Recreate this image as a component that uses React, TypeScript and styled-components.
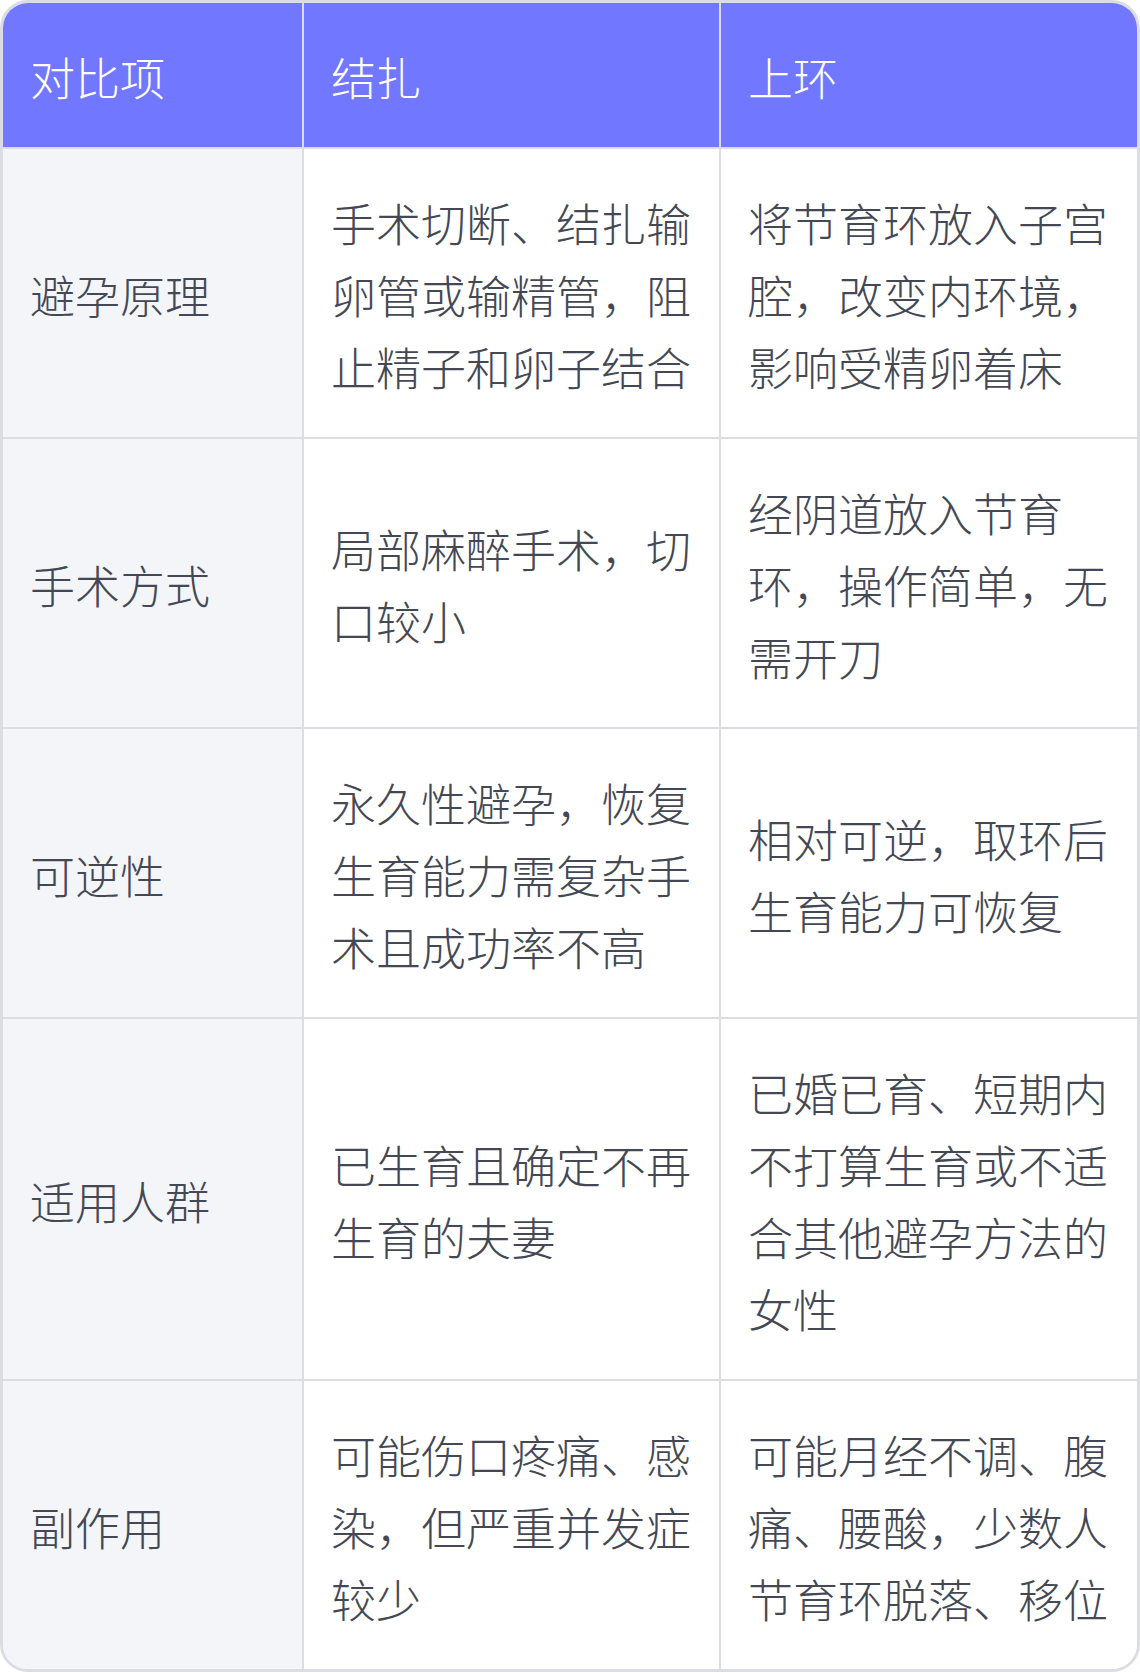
import styled, { createGlobalStyle } from "styled-components";

const GlobalStyle = createGlobalStyle`
    html, body {
        margin: 0;
        padding: 0;
        background: #ffffff;
    }
`;

const Frame = styled.div`
    width: 1140px;
    box-sizing: border-box;
    border: 3px solid #dcdde2;
    border-radius: 28px;
    overflow: hidden;
    background: #ffffff;
`;

const Table = styled.table`
    width: 100%;
    border-collapse: collapse;
    table-layout: fixed;
    font-family: "Noto Sans CJK SC", "Noto Sans", sans-serif;
    font-size: 45px;
    font-weight: 300;
    line-height: 72px;
`;

const HeadCell = styled.th`
    background: #7177ff;
    color: #ffffff;
    font-weight: 300;
    text-align: left;
    padding: 38px 16px 34px 27px;
    border-bottom: 2px solid #dcdde2;
    border-left: 2px solid #dcdde2;
    &:first-child {
        border-left: none;
    }
`;

const Row = styled.tr`
    &:last-child td {
        border-bottom: none;
    }
`;

const Cell = styled.td<{ $label?: boolean }>`
    background: ${(p) => (p.$label ? "#f4f5f9" : "#ffffff")};
    color: #434854;
    padding: 38px 16px 34px 27px;
    vertical-align: middle;
    border-bottom: 2px solid #dcdde2;
    border-left: 2px solid #dcdde2;
    &:first-child {
        border-left: none;
    }
`;

const rows = [
    {
        label: "避孕原理",
        ligation: "手术切断、结扎输卵管或输精管，阻止精子和卵子结合",
        iud: "将节育环放入子宫腔，改变内环境，影响受精卵着床",
    },
    {
        label: "手术方式",
        ligation: "局部麻醉手术，切口较小",
        iud: "经阴道放入节育环，操作简单，无需开刀",
    },
    {
        label: "可逆性",
        ligation: "永久性避孕，恢复生育能力需复杂手术且成功率不高",
        iud: "相对可逆，取环后生育能力可恢复",
    },
    {
        label: "适用人群",
        ligation: "已生育且确定不再生育的夫妻",
        iud: "已婚已育、短期内不打算生育或不适合其他避孕方法的女性",
    },
    {
        label: "副作用",
        ligation: "可能伤口疼痛、感染，但严重并发症较少",
        iud: "可能月经不调、腹痛、腰酸，少数人节育环脱落、移位",
    },
];

function App() {
    return (
        <>
            <GlobalStyle />
            <Frame>
                <Table>
                    <colgroup>
                        <col style={{ width: 300 }} />
                        <col style={{ width: 417 }} />
                        <col />
                    </colgroup>
                    <thead>
                        <tr>
                            <HeadCell>对比项</HeadCell>
                            <HeadCell>结扎</HeadCell>
                            <HeadCell>上环</HeadCell>
                        </tr>
                    </thead>
                    <tbody>
                        {rows.map((r) => (
                            <Row key={r.label}>
                                <Cell $label>{r.label}</Cell>
                                <Cell>{r.ligation}</Cell>
                                <Cell>{r.iud}</Cell>
                            </Row>
                        ))}
                    </tbody>
                </Table>
            </Frame>
        </>
    );
}

export default App;
